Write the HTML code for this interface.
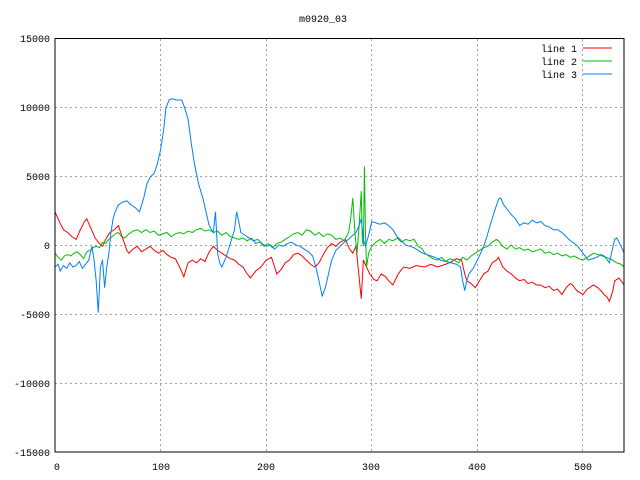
<!DOCTYPE html>
<html><head><style>
body{margin:0;background:#fff}
svg{display:block}
text{font-family:"Liberation Mono","DejaVu Sans Mono",monospace;font-size:10px;fill:#000}
</style></head><body>
<svg width="640" height="480" viewBox="0 0 640 480">
<rect width="640" height="480" fill="#fff"/>
<text x="323" y="22" text-anchor="middle">m0920_03</text>
<g stroke="#a0a0a0" stroke-width="1" stroke-dasharray="2,3" fill="none">
<line x1="55" y1="107.5" x2="624" y2="107.5"/>
<line x1="55" y1="176.5" x2="624" y2="176.5"/>
<line x1="55" y1="245.5" x2="624" y2="245.5"/>
<line x1="55" y1="314.5" x2="624" y2="314.5"/>
<line x1="55" y1="383.5" x2="624" y2="383.5"/>
<line x1="160.5" y1="39" x2="160.5" y2="452"/>
<line x1="266.5" y1="39" x2="266.5" y2="452"/>
<line x1="371.5" y1="39" x2="371.5" y2="452"/>
<line x1="477.5" y1="39" x2="477.5" y2="452"/>
<line x1="582.5" y1="39" x2="582.5" y2="452"/>
</g>
<g font-size="10" text-anchor="end">
<text x="50" y="42">15000</text><text x="50" y="111">10000</text><text x="50" y="180">5000</text>
<text x="50" y="249">0</text><text x="50" y="318">-5000</text><text x="50" y="387">-10000</text><text x="50" y="456">-15000</text>
</g>
<g text-anchor="middle">
<text x="57" y="470">0</text><text x="161" y="470">100</text><text x="266" y="470">200</text>
<text x="371" y="470">300</text><text x="477" y="470">400</text><text x="583" y="470">500</text>
</g>
<g transform="translate(55,246.3) scale(1.056,-0.0138)" fill="none" stroke-width="1">
<polyline vector-effect="non-scaling-stroke" stroke="#ff0000" points="0,2500 4,1800 8,1200 12,1000 16,700 20,500 24,1200 28,1800 30,2000 34,1300 38,600 42,200 45,0 48,500 52,1000 56,1200 60,1500 64,600 68,-300 70,-500 74,-200 78,0 82,-400 86,-200 90,0 94,-300 98,-500 102,-300 106,-600 110,-800 114,-900 118,-1500 122,-2200 126,-1200 130,-1000 134,-1200 138,-900 142,-1100 146,-400 150,0 154,-300 158,-500 162,-700 166,-900 170,-1000 174,-1300 178,-1500 182,-2000 185,-2300 190,-1800 195,-1500 200,-1000 205,-800 208,-1500 210,-2000 214,-1700 218,-1200 222,-1000 226,-600 230,-500 234,-700 238,-1000 242,-1300 246,-1500 250,-1200 254,-600 258,-100 262,200 266,0 270,300 275,500 279,-200 282,-500 285,0 287,-1500 290,-3800 292,-1000 295,-1500 298,-2000 302,-2400 305,-2500 309,-2000 313,-2200 316,-2500 320,-2800 325,-2000 330,-1500 336,-1600 342,-1400 350,-1500 356,-1300 362,-1500 370,-1300 376,-1100 380,-900 385,-1000 388,-2000 390,-2500 394,-2700 398,-3000 402,-2500 406,-2000 410,-1800 414,-1200 418,-1000 420,-800 424,-1500 428,-1800 432,-2000 436,-2300 440,-2500 444,-2400 448,-2700 452,-2600 456,-2800 460,-2800 464,-3000 468,-2900 472,-3200 476,-3100 480,-3500 484,-3000 488,-2700 490,-2800 494,-3200 498,-3400 500,-3500 504,-3100 508,-2900 510,-2800 514,-3000 518,-3300 520,-3500 523,-3700 525,-4000 528,-3300 530,-2500 534,-2300 537,-2600 539,-2800"/>
<polyline vector-effect="non-scaling-stroke" stroke="#00c000" points="0,-500 3,-800 6,-1000 9,-700 12,-600 15,-700 18,-500 21,-400 24,-600 27,-900 30,-400 33,-300 36,-100 39,0 42,-100 45,300 48,200 51,500 54,700 57,900 60,1000 63,700 66,600 70,900 74,1100 78,1200 82,1000 86,1200 90,1000 94,1100 98,800 102,900 106,1000 110,700 114,900 118,1000 122,900 126,1100 130,1000 134,1200 138,1300 142,1100 146,1200 150,1000 154,1100 158,800 162,1000 166,700 170,600 174,500 178,600 182,400 186,600 190,200 194,300 198,0 202,200 206,-100 210,200 214,300 218,500 222,700 226,900 230,1000 234,800 238,1200 242,1100 246,800 250,1000 254,700 258,900 262,800 266,500 270,600 274,400 278,1000 280,2000 282,3500 284,1000 286,-500 288,1500 290,4000 291,500 292,0 293,5800 294,1000 295,-1500 297,-500 300,0 304,300 308,500 312,200 316,500 320,400 324,600 328,300 332,500 336,400 340,500 344,0 348,-200 350,-500 354,-700 358,-900 362,-1000 366,-800 370,-1100 374,-900 378,-1000 382,-1200 386,-800 390,-1000 394,-700 398,-500 402,-300 406,-100 410,0 414,300 418,500 420,400 424,0 428,-200 432,100 436,-200 440,-100 444,-300 448,-200 452,-400 456,-300 460,-200 464,-500 468,-400 472,-600 476,-500 480,-700 484,-600 488,-800 492,-700 496,-900 500,-1000 504,-800 508,-600 510,-500 514,-600 518,-700 522,-800 525,-900 528,-1000 532,-1200 536,-1300 539,-1500"/>
<polyline vector-effect="non-scaling-stroke" stroke="#0080ff" points="0,-1500 3,-1300 5,-1800 8,-1400 11,-1600 14,-1200 17,-1500 20,-1400 23,-1100 26,-1600 29,-1300 32,-1000 35,0 37,-1000 39,-2500 41,-4800 43,-1500 45,-1000 47,-3000 49,-1500 51,-500 53,1000 55,2000 57,2500 60,3000 64,3200 68,3300 72,3000 76,2800 80,2500 84,3500 87,4500 90,5000 94,5300 97,6000 100,7000 103,8500 105,10000 108,10600 111,10700 115,10600 120,10600 123,10000 126,9200 129,7500 132,6000 136,4500 140,3500 143,2500 146,1500 150,1000 152,2500 154,-500 156,-1200 158,-1500 162,-800 166,200 170,1200 172,2500 174,1800 176,1000 180,800 184,600 188,400 192,500 196,200 200,0 204,100 208,-200 212,100 216,0 220,200 224,300 228,100 232,0 236,-200 240,-400 244,-700 247,-1500 250,-2500 253,-3600 256,-3000 259,-2000 262,-1000 266,-300 270,0 274,300 278,500 282,800 285,1000 288,1500 290,2000 292,500 294,0 297,800 300,1800 304,1700 308,1600 312,1700 316,1500 320,1200 324,700 328,400 332,100 336,0 340,-100 344,-300 348,-500 352,-600 356,-700 360,-800 365,-1000 370,-1100 375,-1200 380,-1300 384,-1500 386,-2500 388,-3200 390,-2500 392,-2000 396,-1600 400,-1000 403,-500 406,0 409,700 412,1500 416,2500 420,3400 422,3500 425,3000 428,2700 432,2300 436,2000 440,1500 444,1700 448,1600 452,1900 456,1700 460,1800 464,1500 468,1400 472,1200 476,1200 480,1000 484,700 488,400 492,200 495,0 499,-400 502,-700 505,-1000 509,-900 513,-800 517,-600 520,-700 523,-1000 525,-1200 527,-500 530,500 532,600 534,300 536,0 539,-500"/>
</g>
<rect x="55" y="38.5" width="569" height="413.5" fill="none" stroke="#000" stroke-width="1"/>
<g text-anchor="end">
<text x="577" y="52">line 1</text><text x="577" y="65">line 2</text><text x="577" y="78">line 3</text>
</g>
<line x1="583" y1="48" x2="612" y2="48" stroke="#ff0000"/>
<line x1="583" y1="61" x2="612" y2="61" stroke="#00c000"/>
<line x1="583" y1="74" x2="612" y2="74" stroke="#0080ff"/>
</svg>
</body></html>
